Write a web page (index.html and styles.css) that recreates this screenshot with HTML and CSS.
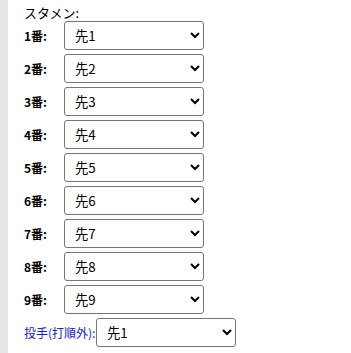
FILE: index.html
```html
<!DOCTYPE html>
<html lang="ja">
<head>
<meta charset="utf-8">
<link rel="stylesheet" href="styles.css">
</head>
<body>
<div class="panel">
  <div class="strip"></div>
  <div class="content">
    <div class="heading">スタメン:</div>
    <div class="order">
      <label class="num">1番:</label><select class="pick"><option>先1</option></select>
      <label class="num">2番:</label><select class="pick"><option>先2</option></select>
      <label class="num">3番:</label><select class="pick"><option>先3</option></select>
      <label class="num">4番:</label><select class="pick"><option>先4</option></select>
      <label class="num">5番:</label><select class="pick"><option>先5</option></select>
      <label class="num">6番:</label><select class="pick"><option>先6</option></select>
      <label class="num">7番:</label><select class="pick"><option>先7</option></select>
      <label class="num">8番:</label><select class="pick"><option>先8</option></select>
      <label class="num">9番:</label><select class="pick"><option>先9</option></select>
    </div>
    <div class="pitcher">
      <label class="plabel">投手(打順外):</label><select class="pick"><option>先1</option></select>
    </div>
  </div>
</div>
</body>
</html>
```

FILE: styles.css
```css
html, body {
  margin: 0;
  padding: 0;
  background: #ffffff;
}
body {
  font-family: "Noto Sans CJK JP", "Noto Sans", sans-serif;
  font-size: 13px;
  color: #000;
}
.panel {
  display: flex;
  min-height: 353px;
}
.strip {
  width: 8px;
  background: #e6e6e6;
  flex: none;
}
.content {
  padding: 5px 0 0 16px;
}
.heading {
  line-height: 16px;
}
.order {
  display: grid;
  grid-template-columns: 40px 140px;
  row-gap: 4px;
  align-items: center;
}
.num {
  font-weight: bold;
  font-size: 12px;
}
.pick {
  width: 140px;
  height: 29px;
  font-family: "Noto Sans CJK JP", "Noto Sans", sans-serif;
  font-size: 13.33px;
  border: 1px solid #767676;
  border-radius: 3px;
  background: #fff;
  color: #000;
  padding: 0 4px 0 6px;
  margin: 0;
}
.pitcher {
  display: flex;
  align-items: center;
  margin-top: 4px;
}
.plabel {
  color: #2020d0;
  font-size: 12px;
  width: 72px;
}
```
